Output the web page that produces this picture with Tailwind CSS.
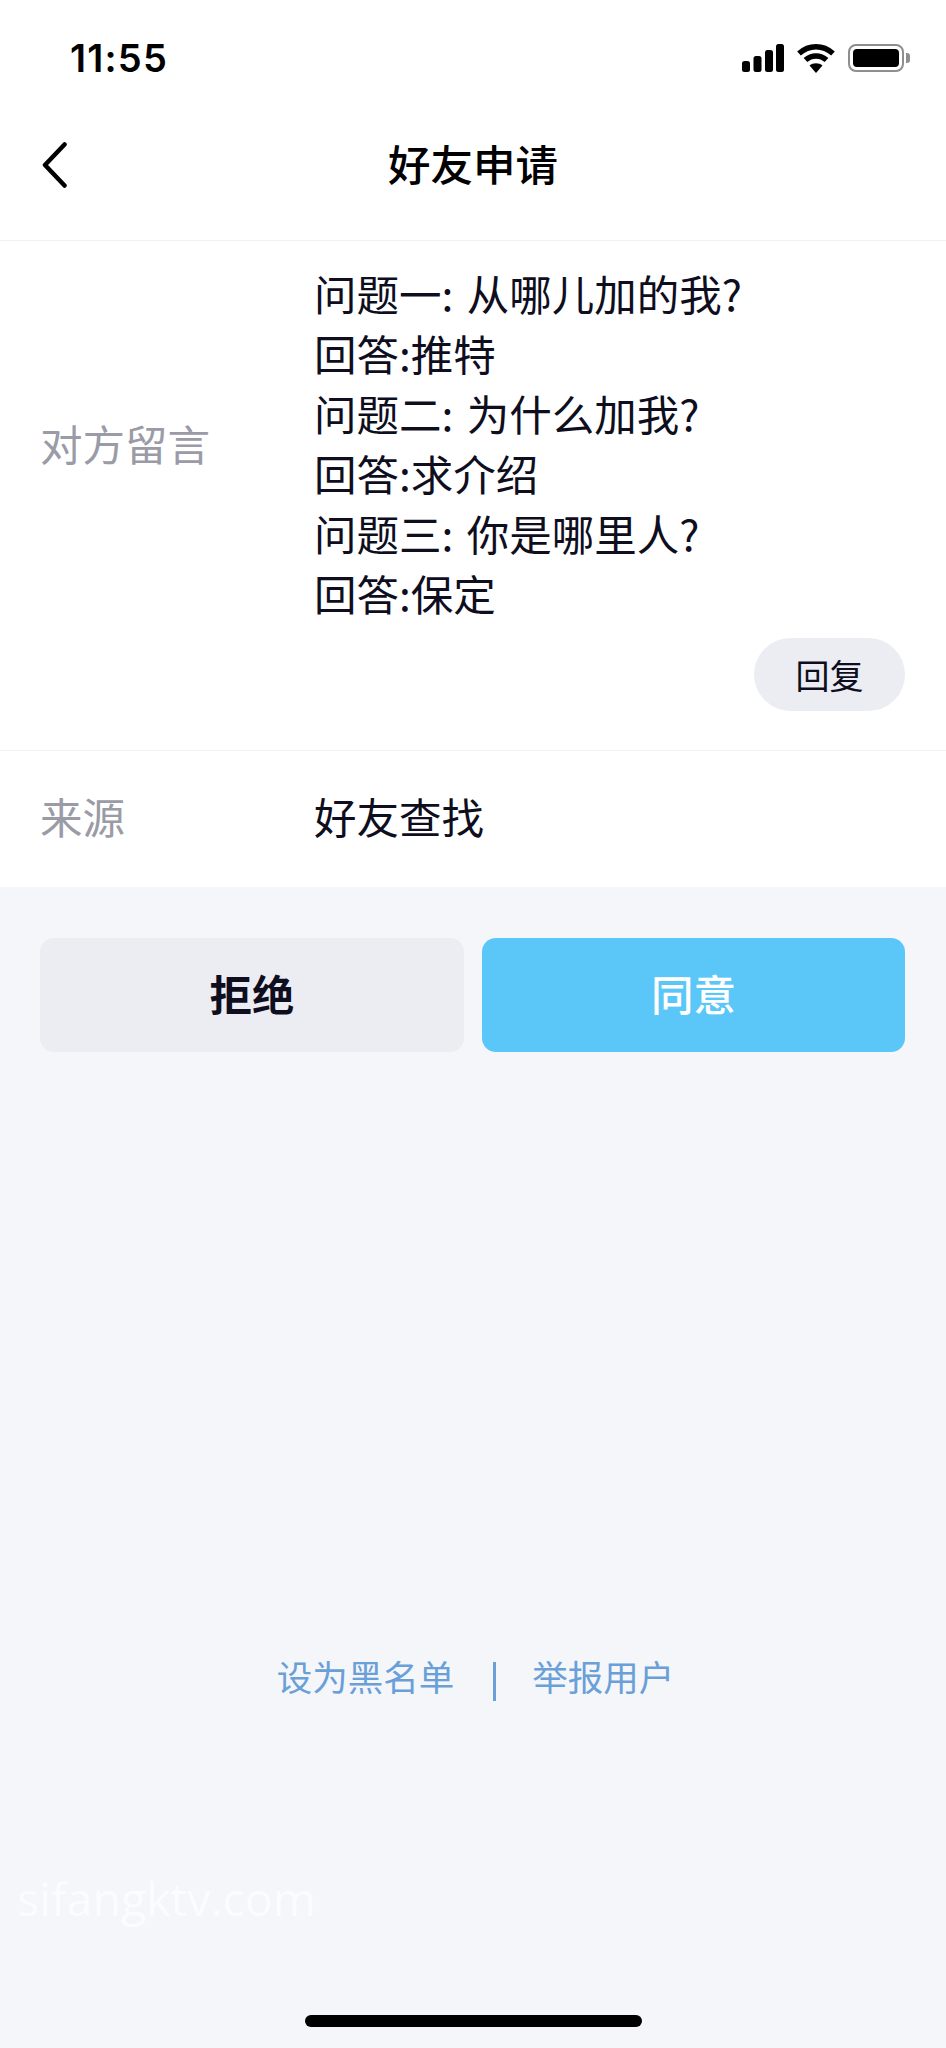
<!DOCTYPE html>
<html lang="zh-CN">
<head>
    <meta charset="UTF-8">
    <meta name="viewport" content="width=device-width, initial-scale=1.0">
    <title>好友申请</title>
    <script src="https://cdn.jsdelivr.net/npm/@tailwindcss/browser@4"></script>
</head>
<body class="bg-[#f4f6fa] font-['Noto_Sans_CJK_SC','Noto_Sans',sans-serif] text-[#0e0e1e]">
<div class="relative w-[946px] h-[2048px] overflow-hidden">
    <!-- status bar + nav -->
    <div class="bg-white border-b border-[#f1f1f4] h-[241px]">
        <div class="flex justify-between items-center h-[116px] pl-[70px] pr-[36px]">
            <span class="font-['Inter',sans-serif] font-semibold text-[38px] leading-none tracking-[1.2px] text-black">11:55</span>
            <div class="flex items-center gap-[13px]">
                <svg width="42" height="28" viewBox="0 0 42 28" fill="#000">
                    <rect x="0" y="17" width="8" height="11" rx="2.5"/>
                    <rect x="11.5" y="12" width="8" height="16" rx="2.5"/>
                    <rect x="23" y="6" width="8" height="22" rx="2.5"/>
                    <rect x="34" y="0" width="8" height="28" rx="2.5"/>
                </svg>
                <svg width="38" height="29" viewBox="0 0 38 29" fill="none" stroke="#000" stroke-width="5.5">
                    <path d="M2 9.5 C12 0.5 26 0.5 36 9.5"/>
                    <path d="M8.5 16 C14.5 10.5 23.5 10.5 29.5 16"/>
                    <path d="M19 29 L12.5 21.5 C16 18.5 22 18.5 25.5 21.5 Z" fill="#000" stroke="none"/>
                </svg>
                <div class="flex items-center gap-[2px]">
                    <div class="w-[56px] h-[28px] rounded-[8px] border-[2.5px] border-[#8e8e8e] p-[3px]">
                        <div class="w-full h-full rounded-[4px] bg-black"></div>
                    </div>
                    <div class="w-[4px] h-[10px] rounded-r-[3px] bg-[#8e8e8e]"></div>
                </div>
            </div>
        </div>
        <div class="relative flex items-center justify-center h-[116px] pb-[22px]">
            <svg class="absolute left-[42px] top-[26px]" width="25" height="46" viewBox="0 0 25 46" fill="none" stroke="#000" stroke-width="4.5" stroke-linecap="round" stroke-linejoin="round">
                <path d="M22.5 2.5 L3 23 L22.5 43.5"/>
            </svg>
            <h1 class="text-[42.5px] leading-none font-medium text-black">好友申请</h1>
        </div>
    </div>

    <!-- message row -->
    <div class="bg-white border-b border-[#f1f1f4] h-[510px] pl-[40px] pr-[41px] pt-[22px]">
        <div class="flex items-center">
            <div class="w-[274px] text-[42.5px] text-[#9a9ba6] leading-[60px]">对方留言</div>
            <div class="text-[42.5px] leading-[60px] [word-spacing:4px]">
                <p>问题一: 从哪儿加的我?</p>
                <p>回答:推特</p>
                <p>问题二: 为什么加我?</p>
                <p>回答:求介绍</p>
                <p>问题三: 你是哪里人?</p>
                <p>回答:保定</p>
            </div>
        </div>
        <div class="flex justify-end mt-[15px]">
            <button class="w-[151px] h-[73px] rounded-full bg-[#ecedf3] text-[34px]">回复</button>
        </div>
    </div>

    <!-- source row -->
    <div class="bg-white flex items-center h-[136px] pl-[40px] pb-[6px]">
        <div class="w-[274px] text-[42.5px] text-[#9a9ba6]">来源</div>
        <div class="text-[42.5px]">好友查找</div>
    </div>

    <!-- actions -->
    <div class="flex gap-[18px] pl-[40px] mt-[51px]">
        <button class="w-[424px] h-[114px] pb-[4px] rounded-[14px] bg-[#ecedf3] text-[42.5px] font-bold">拒绝</button>
        <button class="w-[423px] h-[114px] pb-[4px] rounded-[14px] bg-[#5bc6f8] text-[42.5px] font-medium text-white">同意</button>
    </div>

    <!-- footer links -->
    <div class="flex justify-center items-center mt-[600px] h-[48px] text-[35.5px] leading-none text-[#6a9fd8] ml-[5px]">
        <span>设为黑名单</span>
        <span class="w-[3px] h-[39px] bg-[#6a9fd8] ml-[39px] mr-[36px] mt-[10px]"></span>
        <span>举报用户</span>
    </div>

    <!-- watermark + home indicator -->
    <div class="absolute left-[17px] top-[1868px] font-['Open_Sans',sans-serif] text-[46.5px] leading-[60px] text-white/70">sifangktv.com</div>
    <div class="absolute left-[305px] top-[2015px] w-[337px] h-[12px] rounded-full bg-black"></div>
</div>
</body>
</html>
